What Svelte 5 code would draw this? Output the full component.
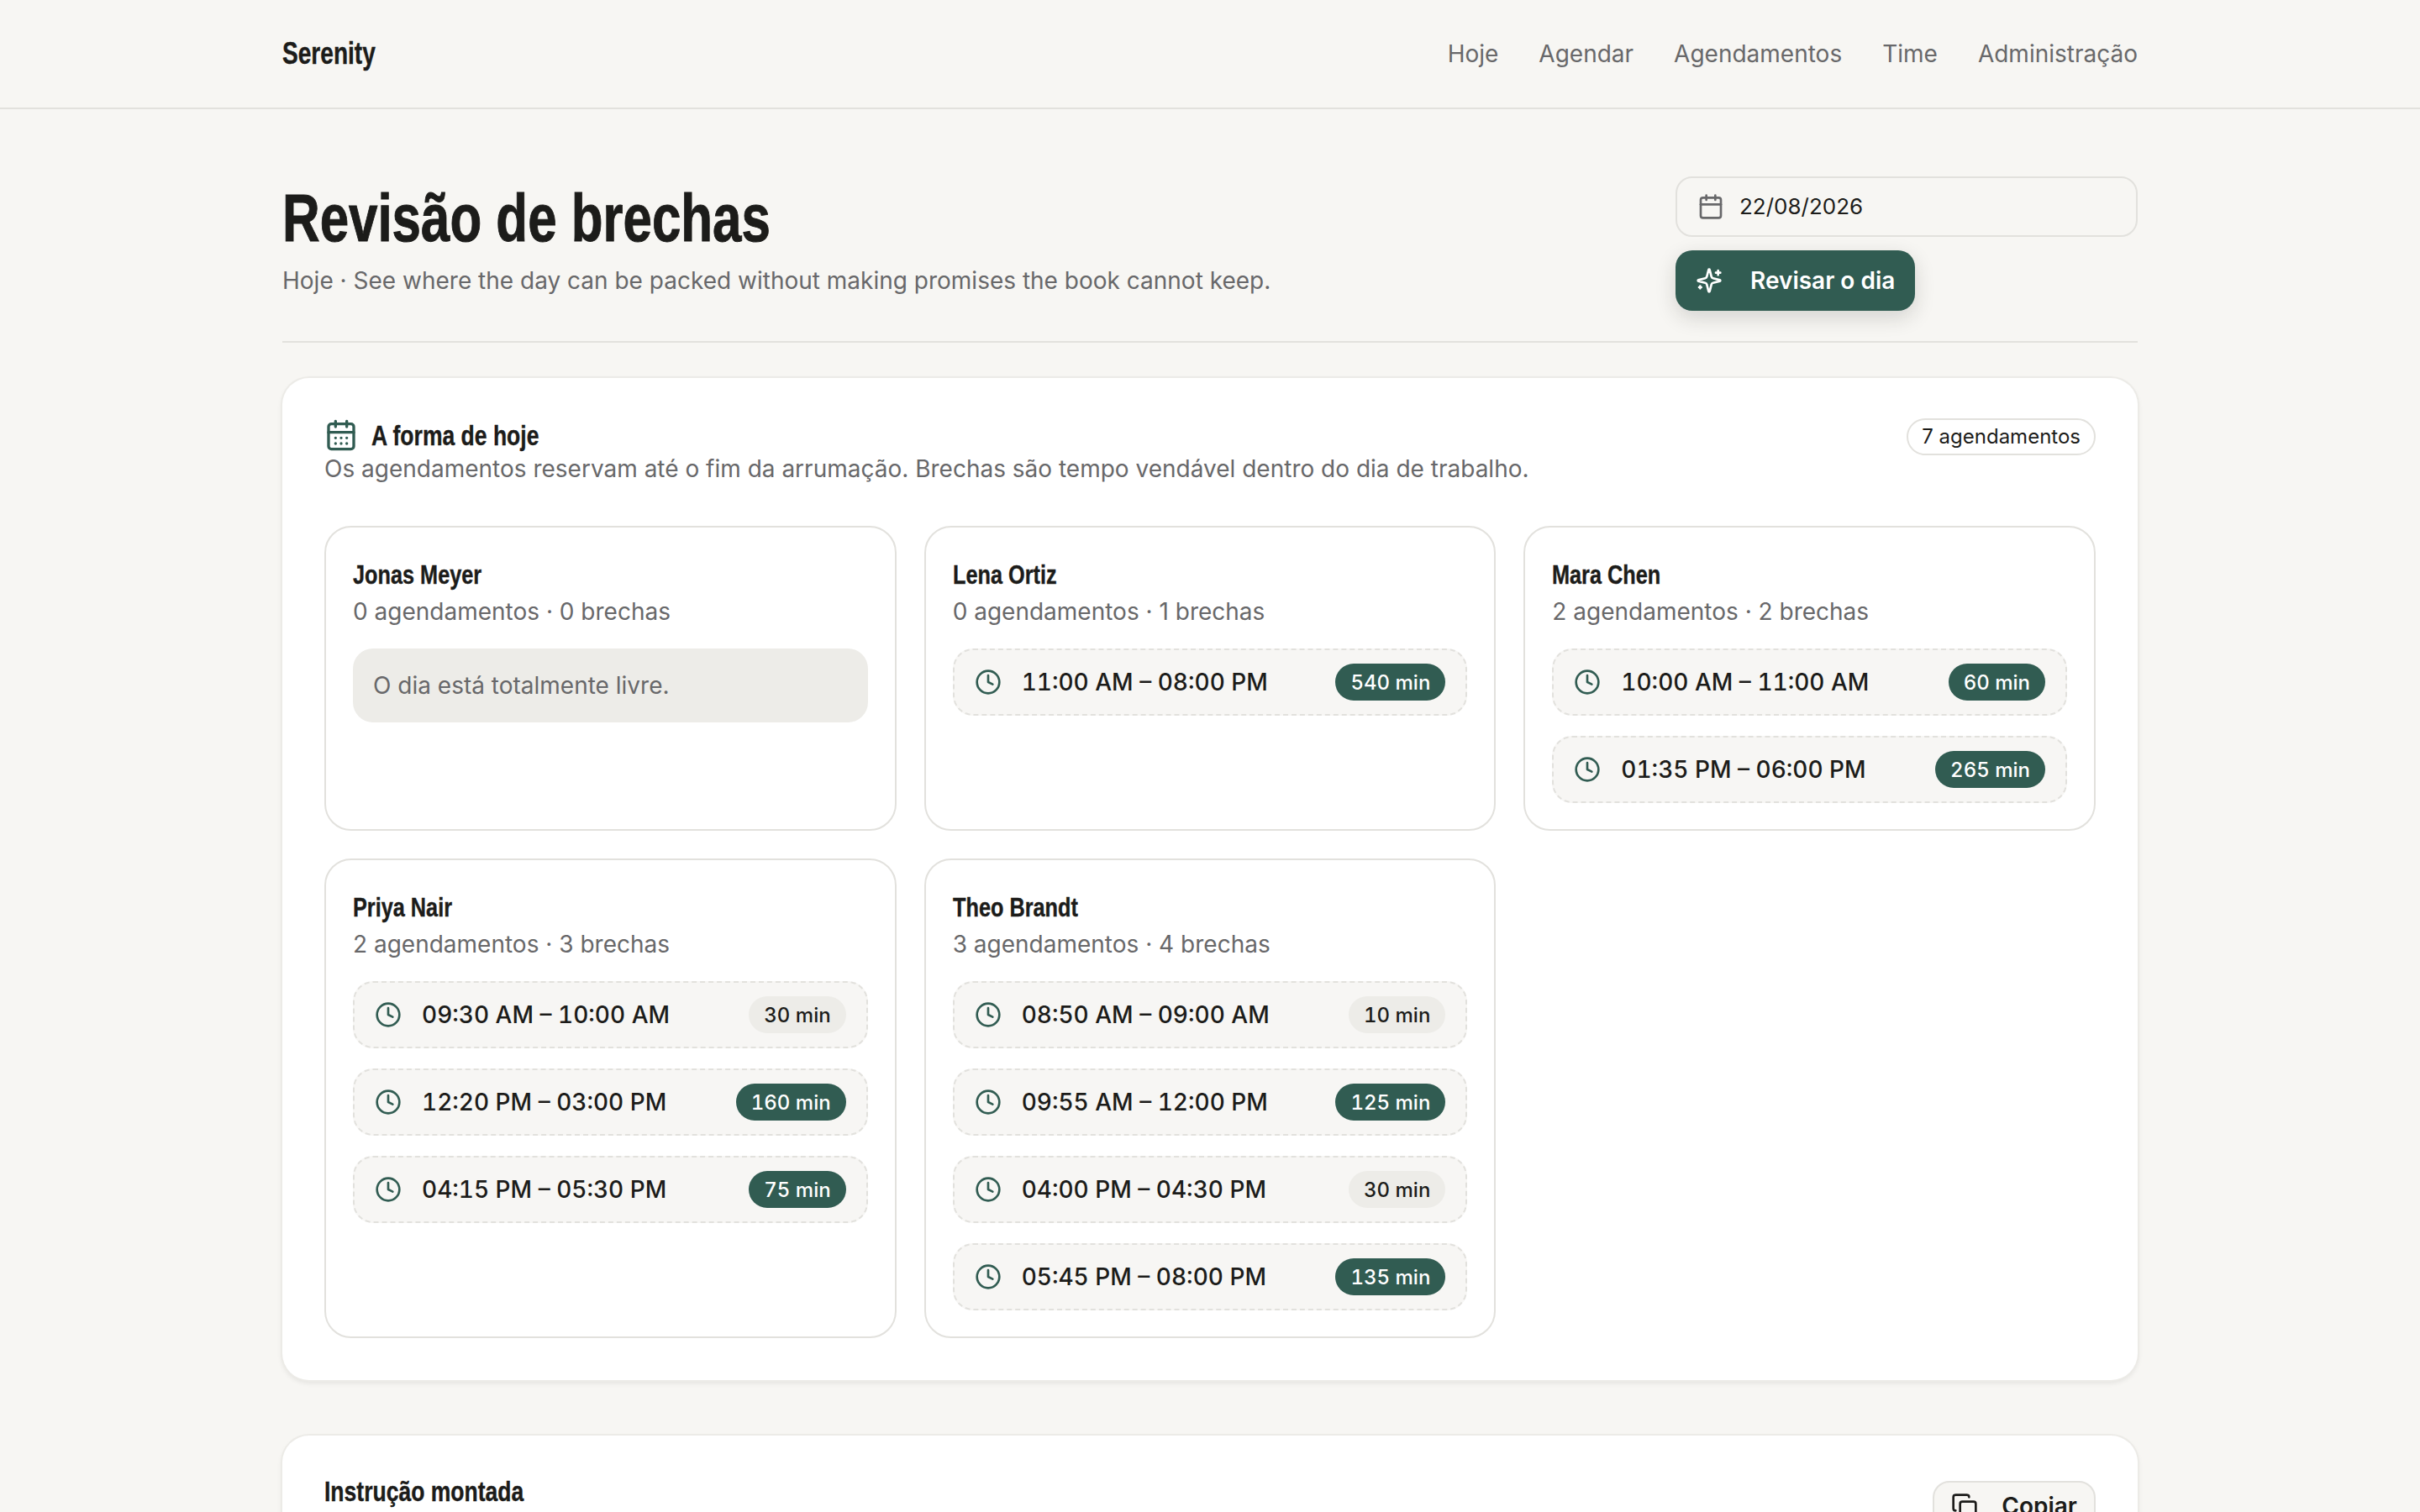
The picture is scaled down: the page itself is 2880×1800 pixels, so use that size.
<script>
  const navLinks = ['Hoje', 'Agendar', 'Agendamentos', 'Time', 'Administração'];

  const staff = [
    { name: 'Jonas Meyer', bookings: 0, gaps: [] },
    { name: 'Lena Ortiz', bookings: 0, gaps: [{ time: '11:00 AM – 08:00 PM', mins: 540, big: true }] },
    {
      name: 'Mara Chen',
      bookings: 2,
      gaps: [
        { time: '10:00 AM – 11:00 AM', mins: 60, big: true },
        { time: '01:35 PM – 06:00 PM', mins: 265, big: true }
      ]
    },
    {
      name: 'Priya Nair',
      bookings: 2,
      gaps: [
        { time: '09:30 AM – 10:00 AM', mins: 30, big: false },
        { time: '12:20 PM – 03:00 PM', mins: 160, big: true },
        { time: '04:15 PM – 05:30 PM', mins: 75, big: true }
      ]
    },
    {
      name: 'Theo Brandt',
      bookings: 3,
      gaps: [
        { time: '08:50 AM – 09:00 AM', mins: 10, big: false },
        { time: '09:55 AM – 12:00 PM', mins: 125, big: true },
        { time: '04:00 PM – 04:30 PM', mins: 30, big: false },
        { time: '05:45 PM – 08:00 PM', mins: 135, big: true }
      ]
    }
  ];
</script>

<div class="page">
  <header class="topbar">
    <div class="topbar-inner">
      <span class="brand"><span class="narrow">Serenity</span></span>
      <nav>
        {#each navLinks as link}
          <a href="#top">{link}</a>
        {/each}
      </nav>
    </div>
  </header>

  <main>
    <section class="page-head">
      <div>
        <h1><span class="narrow">Revisão de brechas</span></h1>
        <p class="lede">Hoje · See where the day can be packed without making promises the book cannot keep.</p>
      </div>
      <div class="actions">
        <div class="date-field">
          <svg class="date-icon" viewBox="0 0 24 24" fill="none" stroke="currentColor" stroke-width="2" stroke-linecap="round" stroke-linejoin="round">
            <path d="M8 2v4M16 2v4" />
            <rect x="3" y="4" width="18" height="18" rx="2" />
            <path d="M3 10h18" />
          </svg>
          <span class="date-text">22/08/2026</span>
        </div>
        <button class="primary">
          <svg viewBox="0 0 24 24" fill="none" stroke="currentColor" stroke-width="2" stroke-linecap="round" stroke-linejoin="round">
            <path d="M9.94 15.5A2 2 0 0 0 8.5 14.06l-6.14-1.58a.5.5 0 0 1 0-.96L8.5 9.94A2 2 0 0 0 9.94 8.5l1.58-6.14a.5.5 0 0 1 .96 0l1.58 6.14a2 2 0 0 0 1.44 1.44l6.14 1.58a.5.5 0 0 1 0 .96l-6.14 1.58a2 2 0 0 0-1.44 1.44l-1.58 6.14a.5.5 0 0 1-.96 0z" />
            <path d="M20 3v4M22 5h-4M4 17v2M5 18H3" />
          </svg>
          Revisar o dia
        </button>
      </div>
    </section>

    <section class="panel">
      <div class="panel-head">
        <div>
          <h2>
            <svg class="head-icon" viewBox="0 0 24 24" fill="none" stroke="currentColor" stroke-width="2" stroke-linecap="round" stroke-linejoin="round">
              <path d="M8 2v4M16 2v4" />
              <rect x="3" y="4" width="18" height="18" rx="2" />
              <path d="M3 10h18M8 14h.01M12 14h.01M16 14h.01M8 18h.01M12 18h.01M16 18h.01" />
            </svg>
            <span class="narrow">A forma de hoje</span>
          </h2>
          <p class="panel-sub">Os agendamentos reservam até o fim da arrumação. Brechas são tempo vendável dentro do dia de trabalho.</p>
        </div>
        <span class="count">7 agendamentos</span>
      </div>

      <div class="staff-grid">
        {#each staff as person}
          <article class="staff-card">
            <h3><span class="narrow">{person.name}</span></h3>
            <p class="staff-meta">{person.bookings} agendamentos · {person.gaps.length} brechas</p>
            {#if person.gaps.length === 0}
              <div class="free">O dia está totalmente livre.</div>
            {:else}
              <ul>
                {#each person.gaps as gap}
                  <li>
                    <span class="slot">
                      <svg viewBox="0 0 24 24" fill="none" stroke="currentColor" stroke-width="2" stroke-linecap="round" stroke-linejoin="round">
                        <circle cx="12" cy="12" r="10" />
                        <path d="M12 6v6l4 2" />
                      </svg>
                      {gap.time}
                    </span>
                    <span class="mins" class:big={gap.big}>{gap.mins} min</span>
                  </li>
                {/each}
              </ul>
            {/if}
          </article>
        {/each}
      </div>
    </section>

    <section class="panel prompt">
      <div class="panel-head">
        <div>
          <h2><span class="narrow">Instrução montada</span></h2>
          <p class="panel-sub">A instrução exata enviada ao modelo para esta revisão, com os dados do dia.</p>
        </div>
        <button class="ghost">
          <svg viewBox="0 0 24 24" fill="none" stroke="currentColor" stroke-width="2" stroke-linecap="round" stroke-linejoin="round">
            <rect x="8" y="8" width="14" height="14" rx="2" />
            <path d="M4 16c-1.1 0-2-.9-2-2V4c0-1.1.9-2 2-2h10c1.1 0 2 .9 2 2" />
          </svg>
          Copiar
        </button>
      </div>
    </section>
  </main>
</div>

<style>
  :global(body) {
    background: #f7f6f3;
    color: #1c1c1a;
    font-family: Inter, "Liberation Sans", sans-serif;
  }

  .page {
    height: 1800px;
    overflow: hidden;
  }

  /* headings are a squeezed Arial-style bold, no narrow family is installed */
  .narrow {
    display: inline-block;
    white-space: nowrap;
    transform: scaleX(0.78);
    transform-origin: left center;
    -webkit-text-stroke: 0.4px currentColor;
  }

  .brand,
  h1,
  h2,
  h3 {
    font-family: "Liberation Sans", sans-serif;
    font-weight: 700;
  }

  .topbar {
    height: 128px;
    border-bottom: 2px solid #e2e1dd;
  }

  .topbar-inner {
    width: 2208px;
    height: 100%;
    margin: 0 auto;
    display: flex;
    align-items: center;
    justify-content: space-between;
  }

  .brand {
    font-size: 36px;
    line-height: 44px;
  }

  nav {
    display: flex;
    gap: 48px;
  }

  nav a {
    color: #68686a;
    font-size: 28px;
    text-decoration: none;
  }

  main {
    width: 2208px;
    margin: 0 auto;
  }

  .page-head {
    display: flex;
    justify-content: space-between;
    padding: 80px 0 36px;
    border-bottom: 2px solid #e2e1dd;
    margin-bottom: 42px;
  }

  h1 {
    margin: 8px 0 0;
    font-size: 80px;
    line-height: 84px;
  }

  h1 .narrow {
    transform: scaleX(0.773);
    -webkit-text-stroke: 1px currentColor;
  }

  .lede {
    margin: 10px 0 0;
    color: #68686a;
    font-size: 28px;
    line-height: 44px;
  }

  .actions {
    width: 550px;
    display: flex;
    flex-direction: column;
    align-items: flex-start;
    gap: 16px;
  }

  .date-field {
    box-sizing: border-box;
    width: 100%;
    height: 72px;
    padding: 0 24px;
    display: flex;
    align-items: center;
    gap: 18px;
    border: 2px solid #e2e1dd;
    border-radius: 20px;
    font-size: 26px;
  }

  .date-text {
    margin-bottom: 2px;
  }

  .date-icon {
    width: 32px;
    height: 32px;
    color: #68686a;
  }

  .primary {
    height: 72px;
    padding: 0 24px;
    display: flex;
    align-items: center;
    gap: 33px;
    border: 0;
    border-radius: 20px;
    background: #315c52;
    color: #fff;
    font: 600 28px Inter, sans-serif;
    box-shadow: 0 8px 24px rgba(28, 28, 26, 0.16);
  }

  .primary svg {
    width: 32px;
    height: 32px;
  }

  .panel {
    padding: 48px 50px 50px;
    background: #fff;
    border-radius: 32px;
    box-shadow: 0 0 0 2px #ecebe7, 0 3px 6px rgba(28, 28, 26, 0.1);
  }

  .prompt {
    margin-top: 66px;
  }

  .panel-head {
    display: flex;
    justify-content: space-between;
    align-items: flex-start;
  }

  h2 {
    margin: 0;
    display: flex;
    align-items: center;
    gap: 16px;
    font-size: 34px;
    line-height: 40px;
  }

  .head-icon {
    width: 40px;
    height: 40px;
    color: #315c52;
  }

  .panel-sub {
    margin: 0;
    color: #68686a;
    font-size: 28px;
    line-height: 40px;
  }

  .prompt h2 {
    line-height: 36px;
  }

  .prompt .panel-sub {
    margin-top: -1px;
  }

  .count {
    padding: 5px 16px;
    border: 2px solid #e2e1dd;
    border-radius: 999px;
    font-size: 24px;
    line-height: 30px;
  }

  .staff-grid {
    margin-top: 48px;
    display: grid;
    grid-template-columns: repeat(3, 1fr);
    gap: 33px;
  }

  .staff-card {
    padding: 32px 32px 31px;
    border: 2px solid #e2e1dd;
    border-radius: 32px;
  }

  h3 {
    margin: 0;
    font-size: 32px;
    line-height: 48px;
  }

  h3 .narrow {
    transform: scaleX(0.79);
  }

  .staff-meta {
    margin: 0;
    color: #68686a;
    font-size: 28px;
    line-height: 40px;
  }

  .free {
    margin-top: 24px;
    padding: 24px;
    background: #edecE8;
    border-radius: 24px;
    color: #68686a;
    font-size: 28px;
    line-height: 40px;
  }

  ul {
    margin: 24px 0 0;
    padding: 0;
    list-style: none;
    display: flex;
    flex-direction: column;
    gap: 24px;
  }

  li {
    box-sizing: border-box;
    height: 80px;
    padding: 0 24px;
    display: flex;
    align-items: center;
    justify-content: space-between;
    background: #f7f6f4;
    border: 2px dashed #e2e1dd;
    border-radius: 24px;
  }

  .slot {
    display: flex;
    align-items: center;
    gap: 24px;
    font-size: 28px;
    font-weight: 500;
    font-variant-numeric: tabular-nums;
  }

  .slot svg {
    width: 32px;
    height: 32px;
    color: #315c52;
  }

  .mins {
    padding: 0 18px;
    height: 44px;
    display: flex;
    align-items: center;
    border-radius: 999px;
    background: #edecE8;
    font-size: 24px;
    font-weight: 500;
    font-variant-numeric: tabular-nums;
  }

  .mins.big {
    background: #315c52;
    color: #fff;
  }

  .ghost {
    height: 60px;
    margin-top: 6px;
    padding: 0 20px;
    display: flex;
    align-items: center;
    gap: 28px;
    background: #f7f6f3;
    border: 2px solid #e2e1dd;
    border-radius: 20px;
    color: #1c1c1a;
    font: 600 28px Inter, sans-serif;
  }

  .ghost svg {
    width: 32px;
    height: 32px;
  }
</style>
